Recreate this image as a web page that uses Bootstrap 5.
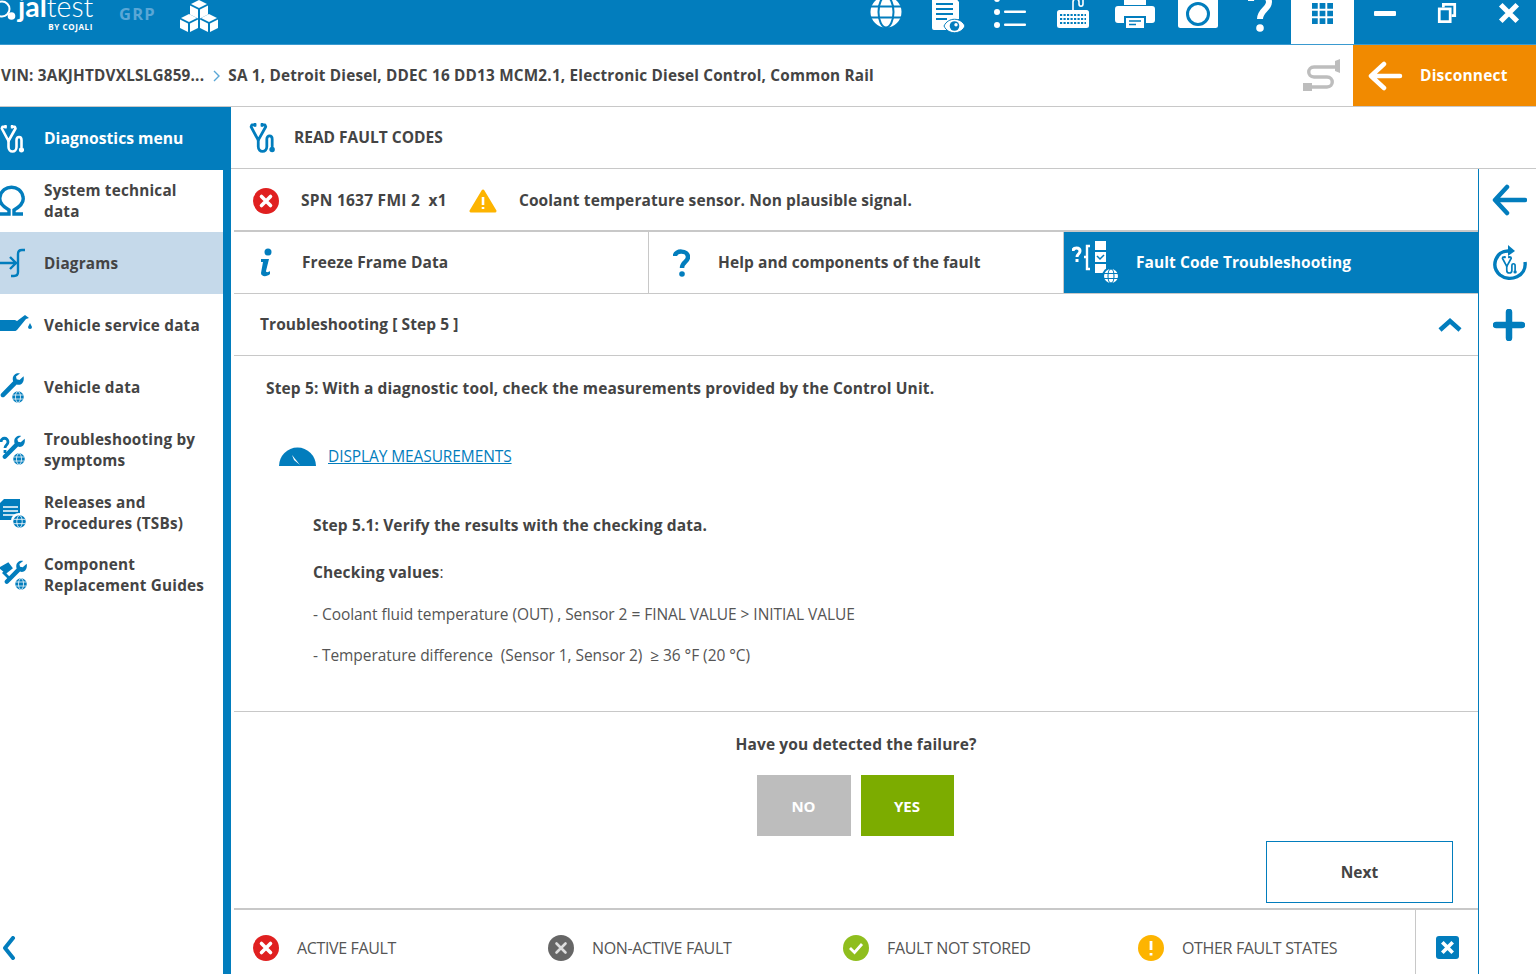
<!DOCTYPE html>
<html lang="en"><head><meta charset="utf-8"><title>Jaltest</title>
<link href="https://cdn.jsdelivr.net/npm/bootstrap@5.3.0/dist/css/bootstrap.min.css" rel="stylesheet">
<style>
:root{--jb:#027dbd;--jt:#444;--jl:#c8c8c8}
html,body{height:974px;overflow:hidden}
body{width:1536px;font-family:"Open Sans","Liberation Sans",sans-serif;color:var(--jt);font-size:15.5px;background:#fff}
svg{display:block;flex:none}
.jb{color:var(--jb)}
.topbar{height:45px;background:var(--jb);color:#fff;overflow:hidden;border-bottom:1px solid #3a9ad0}
.logo-wrap{width:854.4px;flex:none}
.logo-mark{font-family:Lato,sans-serif;font-size:28.5px;line-height:24px;margin-top:-6px}
.logo-mark b{font-weight:700}.logo-mark span{font-weight:300}
.logo-by{font-size:8px;line-height:8px;text-align:right;font-weight:700;letter-spacing:.6px;padding-right:1px;margin-top:5px}
.logo-txt{width:76px;margin-left:2px}
.grp{font-weight:700;font-size:16.5px;letter-spacing:1.2px;color:#5aa7d6;margin:2px 0 0 25px}
.cubes{margin-left:24px}
.tbtn{width:62.4px;flex:none;height:44px;overflow:hidden;padding-bottom:16px}
.tbtn-doc{padding-bottom:10px}
.tbtn-q{padding-bottom:12px}
.tbtn-on{background:#fff;height:45px;padding-bottom:21px;margin-bottom:-1px}
.tbtn-min{padding-bottom:28px}
.tbtn-res{padding-bottom:21px}
.tbtn-cls{padding-bottom:20px}
.crumb{height:62px;border-bottom:1px solid var(--jl);font-weight:700;font-size:15.3px;padding-left:1px;letter-spacing:.2px}
.crumb-sep{margin:0 7px 0 7px}
.cable{margin:0 12px 0 auto}
.disc{width:183px;height:61px;background:#f18a00;color:#fff;font-weight:700;font-size:15.5px;letter-spacing:.2px;border:0;border-radius:0;padding:0 0 0 15px;gap:17px}
.disc:hover{background:#f18a00;color:#fff}
.side{width:231px;height:868px;border-right:8px solid var(--jb)}
.side-h{height:62.5px;flex:none;margin-right:-8px;padding-top:1px;background:var(--jb);color:#fff;font-weight:700;font-size:15.7px}
.side-i{height:62.4px;flex:none;font-weight:700;font-size:15.3px;line-height:20.8px;letter-spacing:.2px;color:var(--jt);text-decoration:none}
.side-i svg{color:var(--jb);margin-left:-2px}
.side-ic{width:44px;flex:none}
.side-on{background:#c5d9ea}
.side-end{height:39px}
.main-h{height:62px;border-bottom:1px solid var(--jl);font-weight:700;font-size:15.5px;padding:1px 0 0 18px}
.main-ttl{margin-left:19px}
.pane{width:1247px;flex:none;padding-left:3px}
.fault{height:63px;border-bottom:2px solid var(--jl);padding:2px 0 0 19px;font-weight:700;letter-spacing:.1px}
.spn{letter-spacing:.25px}
.gap22{margin-left:22px}
.tabbar{height:62px;border-bottom:1px solid var(--jl)}
.tabx{flex:1 1 0;font-weight:700;border-right:1px solid var(--jl);letter-spacing:.08px}
.tabx:last-child{border-right:0;background:var(--jb);color:#fff}
.tab-ttl{margin-left:17px}
.sect{height:62px;border-bottom:1px solid var(--jl);padding:0 16px 0 26px;font-weight:700;letter-spacing:.08px}
.steps{height:356px;border-bottom:1px solid var(--jl);padding:21px 0 0 32px}
.steps p{margin:0}
.fw7{font-weight:700;letter-spacing:.13px}
.alink{font-size:15.5px;color:var(--jb);letter-spacing:-.1px}
.meas{margin:45px 0 0 13px;gap:12px}
.chk{margin:46px 0 0 47px}
.chk p{line-height:21px}
.chk .v{color:#555;letter-spacing:-.05px}
.m26{margin-top:26px!important}.m21{margin-top:21px!important}.m20{margin-top:20px!important}
.askbox{height:198px;border-bottom:2px solid var(--jl);padding-top:21px}
.ynrow{gap:10px;margin-top:19px;padding-right:2px}
.yn{width:94px;height:61px;border:0;border-radius:0;color:#fff;font-weight:700;font-size:15px}
.yn-n{background:#bdbdbd}.yn-n:hover{background:#bdbdbd;color:#fff}
.yn-y{background:#7cac00;width:93px}.yn-y:hover{background:#7cac00;color:#fff}
.next{width:187px;height:62px;border:1px solid var(--jb);border-radius:0;background:#fff;color:var(--jt);font-weight:700;font-size:15.5px}
.nextrow{padding-right:25px;margin-top:5px}
.legend{height:76px;color:#555;font-size:16px;letter-spacing:-.35px}
.lg-i{width:295px;flex:none;padding-left:19px;gap:18px}
.lg-last{width:296px}
.lg-c{width:63px;flex:none;border-left:1px solid var(--jl);height:76px;padding-bottom:2px}
.rail{width:58px;flex:none;border-left:1px solid var(--jb);padding-left:3px}
.rail-b{height:62.4px}
.closeb{width:23px;height:23px;background:var(--jb);border-radius:3px}
</style></head><body>
<svg width="0" height="0" class="position-absolute"><defs>
<symbol id="steth" viewBox="0 0 24 28"><g fill="none" stroke="currentColor" stroke-width="2.600" stroke-linecap="round" stroke-linejoin="round"><path d="M5.500 1.800H2.500L1.800 3.500 8.500 16 15.500 3.500 14.800 1.800H12"/><path d="M8.500 16v6c0 6 8 6 8 0v-7c0-4 5-4 5 0v7"/></g><circle cx="21.500" cy="24.800" r="2.600" fill="currentColor"/><path d="M5.500 0v3.500M12 0v3.500" stroke="currentColor" stroke-width="2.300"/></symbol>
<symbol id="globe" viewBox="0 0 24 24"><circle cx="12" cy="12" r="11.500" fill="currentColor"/><g fill="none" stroke="#fff" stroke-width="1.500"><ellipse cx="12" cy="12" rx="5" ry="11"/><path d="M1 8h22M1 16h22"/></g></symbol>
<symbol id="wrench" viewBox="0 0 32 32"><path fill="currentColor" d="M29 3.500l-5 4.500-3.500-.8-.8-3.500L24.500 0c-4-1-9 1.500-8.800 7 0 1 .2 1.800.5 2.500L1.500 24.500c-2.500 3 1.500 6.500 4 4L20.500 13.500c5 2 10-2.500 8.500-10z"/></symbol>
<symbol id="xcirc" viewBox="0 0 26 26"><circle cx="13" cy="13" r="13" fill="#e02020"/><path d="M8.500 8.500l9 9M17.500 8.500l-9 9" stroke="#fff" stroke-width="3.600" stroke-linecap="round"/></symbol>
</defs></svg>

<header class="topbar d-flex align-items-start">
<div class="logo-wrap d-flex align-items-start">
<svg width="16" height="24" viewBox="0 0 16 24"><circle cx="2" cy="9" r="7.500" fill="none" stroke="#fff" stroke-width="2"/><circle cx="11.500" cy="16" r="3.800" fill="#fff"/></svg>
<div class="logo-txt"><div class="logo-mark"><b>jal</b><span>test</span></div><div class="logo-by">BY COJALI</div></div>
<div class="grp">GRP</div>
<svg class="cubes" width="38" height="32" viewBox="0 0 38 32" fill="#fff"><path d="M19 0l8 4-8 4-8-4zM10 5.500l8 4v9l-8-4zM28 5.500l-8 4v9l8-4z"/><path d="M9 14l8 4-8 4-8-4zM0 19.500l8 4v8.500l-8-4zM18 19.500l-8 4v8.500l8-4z"/><path d="M29 14l8 4-8 4-8-4zM20 19.500l8 4v8.500l-8-4zM38 19.500l-8 4v8.500l8-4z"/></svg>
</div>
<div class="tbtn d-flex justify-content-center align-items-end"><svg width="32" height="32" viewBox="0 0 32 32"><circle cx="16" cy="16" r="15.500" fill="#fff"/><g fill="none" stroke="#027dbd" stroke-width="2"><ellipse cx="16" cy="16" rx="7.500" ry="15.500"/><path d="M0 10.500h32M0 21.500h32"/></g></svg></div>
<div class="tbtn tbtn-doc d-flex justify-content-center align-items-end"><svg width="36" height="38" viewBox="0 0 36 38"><path fill="#fff" d="M2 0h22l5 6v17c-6 1-10 5-12 11H4a2 2 0 0 1-2-2z"/><path d="M6 8h17M6 13h17M6 18h17M6 23h11" stroke="#027dbd" stroke-width="1.800"/><path d="M14 30c4-9 17-9 21 0-4 9-17 9-21 0z" fill="#fff" stroke="#027dbd" stroke-width="1"/><circle cx="24.500" cy="30" r="4.800" fill="#027dbd"/><circle cx="26" cy="28.800" r="1.700" fill="#fff"/></svg></div>
<div class="tbtn d-flex justify-content-center align-items-end"><svg width="32" height="32" viewBox="0 0 32 32" fill="#fff"><circle cx="3" cy="3" r="3"/><circle cx="3" cy="16" r="3"/><circle cx="3" cy="29" r="3"/><rect x="10" y="1.500" width="22" height="2.600" rx="1"/><rect x="10" y="14.500" width="22" height="2.600" rx="1"/><rect x="10" y="27.500" width="22" height="2.600" rx="1"/></svg></div>
<div class="tbtn d-flex justify-content-center align-items-end"><svg width="32" height="33" viewBox="0 0 32 33"><rect x="0" y="15" width="32" height="18" rx="2.500" fill="#fff"/><path d="M3 20h26M3 24h26M3 28h26" stroke="#027dbd" stroke-width="2" stroke-dasharray="2.200 1.300"/><path d="M16 15V7c0-4 6-4 6 0v2c0 3 4 3 4 0V3" fill="none" stroke="#fff" stroke-width="1.600"/></svg></div>
<div class="tbtn d-flex justify-content-center align-items-end"><svg width="40" height="32" viewBox="0 0 40 32"><path fill="#fff" d="M9 0h22v9H9zM3 10h34a3 3 0 0 1 3 3v11a3 3 0 0 1-3 3h-6v-7H9v7H3a3 3 0 0 1-3-3V13a3 3 0 0 1 3-3zM11 22h18v10H11z"/><path d="M14 25h12M14 28.500h7" stroke="#027dbd" stroke-width="1.400"/></svg></div>
<div class="tbtn d-flex justify-content-center align-items-end"><svg width="40" height="34" viewBox="0 0 40 34"><path fill="#fff" d="M2.500 4h6l1-4h7l2 4H37.500A2.500 2.500 0 0 1 40 6.500v25a2.500 2.500 0 0 1-2.500 2.500h-35A2.500 2.500 0 0 1 0 31.500v-25A2.500 2.500 0 0 1 2.500 4z"/><circle cx="20" cy="20" r="10.500" fill="none" stroke="#027dbd" stroke-width="3"/></svg></div>
<div class="tbtn tbtn-q d-flex justify-content-center align-items-end"><svg width="24" height="40" viewBox="0 0 24 40" fill="none"><path d="M3 9c0-8 18-8 18 1 0 7-9 8-9 17" stroke="#fff" stroke-width="6"/><circle cx="12" cy="36" r="3.800" fill="#fff"/></svg></div>
<div class="tbtn tbtn-on d-flex justify-content-center align-items-end"><svg width="21" height="21" viewBox="0 0 22 22" fill="#027dbd"><path d="M0 0h6v6H0zM8 0h6v6H8zM16 0h6v6h-6zM0 8h6v6H0zM8 8h6v6H8zM16 8h6v6h-6zM0 16h6v6H0zM8 16h6v6H8zM16 16h6v6h-6z"/></svg></div>
<div class="tbtn tbtn-min d-flex justify-content-center align-items-end"><svg width="22" height="5" viewBox="0 0 22 5"><rect width="22" height="5" rx="1" fill="#fff"/></svg></div>
<div class="tbtn tbtn-res d-flex justify-content-center align-items-end"><svg width="20" height="20" viewBox="0 0 20 22" fill="none" stroke="#fff" stroke-width="3"><path d="M6 5V1.500h12.500V14H15"/><rect x="1.500" y="6.500" width="12" height="14"/></svg></div>
<div class="tbtn tbtn-cls d-flex justify-content-center align-items-end"><svg width="22" height="22" viewBox="0 0 24 24"><path d="M3 3l18 18M21 3L3 21" stroke="#fff" stroke-width="5.500"/></svg></div>
</header>

<div class="crumb d-flex align-items-center">
<span>VIN: 3AKJHTDVXLSLG859...</span>
<svg class="crumb-sep" width="10" height="12" viewBox="0 0 10 12"><path d="M3 1l5 5-5 5" fill="none" stroke="#5aa7d6" stroke-width="1.400"/></svg>
<span>SA 1, Detroit Diesel, DDEC 16 DD13 MCM2.1, Electronic Diesel Control, Common Rail</span>
<svg class="cable" width="38" height="33" viewBox="0 0 38 33" fill="none" stroke="#bdbdbd" stroke-width="3.400"><path d="M32 8H11c-7 0-7 10 0 10h13c7 0 7 10 0 10H9"/><path d="M32 2l5-2v14l-5-2z" fill="#bdbdbd" stroke="none"/><rect x="0" y="24" width="9" height="8" fill="#bdbdbd" stroke="none"/></svg>
<button class="btn disc d-flex align-items-center align-self-start" type="button"><svg width="35" height="30" viewBox="0 0 35 30" fill="none" stroke="#fff" stroke-width="4.500" stroke-linecap="round" stroke-linejoin="round"><path d="M16 3L3 15l13 12M4 15h28"/></svg>Disconnect</button>
</div>

<div class="d-flex">
<aside class="side d-flex flex-column">
<div class="side-h d-flex align-items-center"><div class="side-ic"><svg width="24" height="28" viewBox="0 0 24 28"><use href="#steth"/></svg></div>Diagnostics menu</div>
<a class="side-i d-flex align-items-center" href="#"><div class="side-ic"><svg width="32" height="32" viewBox="0 0 32 32"><path fill="none" stroke="currentColor" stroke-width="3.400" d="M2 29h9v-4C4 21 1 16 2 12 4-1 23-1 25 12c1 4-2 9-9 13v4h9"/></svg></div><span>System technical<br>data</span></a>
<a class="side-i side-on d-flex align-items-center" href="#"><div class="side-ic"><svg width="32" height="32" viewBox="0 0 32 32"><path fill="none" stroke="currentColor" stroke-width="2.400" d="M0 16h18M12 10l6 6-6 6M27 3h-3c-3 0-4 2-4 4v18c0 3-2 4-4 4h-3"/></svg></div><span>Diagrams</span></a>
<a class="side-i d-flex align-items-center" href="#"><div class="side-ic"><svg width="36" height="32" viewBox="0 0 36 32"><path fill="currentColor" d="M2 11h15l2 1 8-6 4 3-3 1-9 11c-1 1-2 1-3 1H2z"/><path fill="currentColor" d="M32 14l2 4a2 2 0 1 1-4 0z"/></svg></div><span>Vehicle service data</span></a>
<a class="side-i d-flex align-items-center" href="#"><div class="side-ic"><svg width="32" height="32" viewBox="0 0 32 32"><use href="#wrench" x="2" width="26" height="29"/><circle cx="20" cy="25" r="7.500" fill="#fff"/><use href="#globe" x="14" y="19" width="12" height="12" color="#027dbd"/></svg></div><span>Vehicle data</span></a>
<a class="side-i d-flex align-items-center" href="#"><div class="side-ic"><svg width="32" height="32" viewBox="0 0 32 32"><use href="#wrench" x="4" y="1" width="25" height="27"/><circle cx="21" cy="25" r="7" fill="#fff"/><use href="#globe" x="15" y="19" width="12" height="12" color="#027dbd"/><path d="M3 8c0-5 7-5 7 0 0 3-3 3-3 6M7 16v3" stroke="currentColor" stroke-width="2.800" fill="none"/></svg></div><span>Troubleshooting by<br>symptoms</span></a>
<a class="side-i d-flex align-items-center" href="#"><div class="side-ic"><svg width="32" height="32" viewBox="0 0 32 32"><path fill="currentColor" d="M6 2h16v21H2V6z"/><path d="M5 10h15M5 14h15M5 18h15" stroke="#fff" stroke-width="1.600"/><circle cx="21" cy="24" r="8" fill="#fff"/><use href="#globe" x="15" y="18" width="13" height="13" color="#027dbd"/></svg></div><span>Releases and<br>Procedures (TSBs)</span></a>
<a class="side-i d-flex align-items-center" href="#"><div class="side-ic"><svg width="32" height="32" viewBox="0 0 32 32"><use href="#wrench" x="6" y="1" width="25" height="27"/><circle cx="23" cy="25" r="7" fill="#fff"/><use href="#globe" x="17" y="19" width="12" height="12" color="#027dbd"/><path d="M3 9l5 4 5-4-3-4zM5 13l7 7" stroke="currentColor" stroke-width="2.800" fill="currentColor"/></svg></div><span>Component<br>Replacement Guides</span></a>
<div class="mt-auto side-end"><svg class="jb" width="16" height="24" viewBox="0 0 16 24" fill="none" stroke="currentColor" stroke-width="4" stroke-linecap="round" stroke-linejoin="round"><path d="M13 2L5 12l8 10"/></svg></div>
</aside>

<div class="flex-grow-1">
<div class="main-h d-flex align-items-center"><svg class="jb" width="26" height="30" viewBox="0 0 24 28"><use href="#steth"/></svg><span class="main-ttl">READ FAULT CODES</span></div>
<div class="d-flex">
<div class="pane">
<div class="fault d-flex align-items-center"><svg width="26" height="26" viewBox="0 0 26 26"><use href="#xcirc"/></svg><span class="gap22 spn">SPN 1637 FMI 2&nbsp; x1</span>
<svg class="gap22" width="28" height="24" viewBox="0 0 28 24"><path d="M14 2L2 22h24z" fill="#fdb400" stroke="#fdb400" stroke-width="3" stroke-linejoin="round"/><path d="M14 8v8M14 18v2" stroke="#fff" stroke-width="2.600"/></svg>
<span class="gap22">Coolant temperature sensor. Non plausible signal.</span></div>
<div class="tabbar d-flex">
<div class="tabx d-flex align-items-center"><div class="ps-4"><svg class="jb" width="16" height="30" viewBox="0 0 16 30" fill="currentColor"><circle cx="10" cy="4" r="3.500"/><path d="M3 11h8l-3 12c0 2 3 1 4 0v3c-3 3-9 3-9-1l2-11H3z"/></svg></div><span class="ms-4 ps-1">Freeze Frame Data</span></div>
<div class="tabx d-flex align-items-center"><div class="ps-4"><svg class="jb" width="17" height="28" viewBox="0 0 17 28" fill="none" stroke="currentColor" stroke-width="4.500"><path d="M2 7c0-6 13-6 13 1 0 5-6 5-6 11"/><circle cx="9" cy="25" r="2.800" fill="currentColor" stroke="none"/></svg></div><span class="ms-4 ps-1">Help and components of the fault</span></div>
<div class="tabx d-flex align-items-center"><svg class="ms-2" width="47" height="44" viewBox="0 0 47 44" fill="#fff"><path d="M1 10c0-4 7-4 7 0 0 3-3 3-3 6M5 18v3" stroke="#fff" stroke-width="3" fill="none"/><path d="M18 5h-3v11h-3 3v12h3" stroke="#fff" stroke-width="2.400" fill="none"/><rect x="23" y="0" width="11" height="9"/><rect x="23" y="11" width="11" height="10"/><rect x="23" y="23" width="11" height="9"/><path d="M25 15l3 3 4-4" stroke="#027dbd" stroke-width="1.500" fill="none"/><circle cx="39" cy="35" r="9" fill="#027dbd"/><circle cx="39" cy="35" r="7" fill="#fff"/><g fill="none" stroke="#027dbd" stroke-width="1.100"><ellipse cx="39" cy="35" rx="3" ry="7"/><path d="M32 32.500h14M32 37.500h14"/></g></svg><span class="tab-ttl">Fault Code Troubleshooting</span></div>
</div>
<div class="sect d-flex align-items-center justify-content-between"><span>Troubleshooting [ Step 5 ]</span><svg class="jb" width="24" height="15" viewBox="0 0 24 15" fill="none" stroke="currentColor" stroke-width="4.500"><path d="M2 13l10-9 10 9"/></svg></div>
<div class="steps">
<p class="fw7">Step 5: With a diagnostic tool, check the measurements provided by the Control Unit.</p>
<div class="meas d-flex align-items-center"><svg width="37" height="19" viewBox="0 0 37 19"><path fill="#027dbd" d="M0 19a18.500 18.500 0 0 1 37 0z"/><path d="M13 8l8 10-6-5z" fill="#fff"/></svg><a class="alink" href="#">DISPLAY MEASUREMENTS</a></div>
<div class="chk">
<p class="fw7">Step 5.1: Verify the results with the checking data.</p>
<p class="fw7 m26">Checking values<span class="fw-normal">:</span></p>
<p class="v m21">- Coolant fluid temperature (OUT) , Sensor 2 = FINAL VALUE &gt; INITIAL VALUE</p>
<p class="v m20">- Temperature difference&nbsp; (Sensor 1, Sensor 2)&nbsp; ≥ 36 °F (20 °C)</p>
</div>
</div>
<div class="askbox">
<div class="text-center fw7">Have you detected the failure?</div>
<div class="d-flex justify-content-center ynrow"><button class="btn yn yn-n" type="button">NO</button><button class="btn yn yn-y" type="button">YES</button></div>
<div class="nextrow d-flex justify-content-end"><button class="btn next" type="button">Next</button></div>
</div>
<div class="legend d-flex align-items-center">
<div class="lg-i d-flex align-items-center"><svg width="26" height="26" viewBox="0 0 26 26"><use href="#xcirc"/></svg>ACTIVE FAULT</div>
<div class="lg-i d-flex align-items-center"><svg width="26" height="26" viewBox="0 0 26 26"><circle cx="13" cy="13" r="13" fill="#666"/><path d="M8.500 8.500l9 9M17.500 8.500l-9 9" stroke="#ddd" stroke-width="2.600" stroke-linecap="round"/></svg>NON-ACTIVE FAULT</div>
<div class="lg-i d-flex align-items-center"><svg width="26" height="26" viewBox="0 0 26 26"><circle cx="13" cy="13" r="13" fill="#8fbe1e"/><path d="M7 13l4.500 4.500L19 9" fill="none" stroke="#fff" stroke-width="2.800"/></svg>FAULT NOT STORED</div>
<div class="lg-i lg-last d-flex align-items-center"><svg width="26" height="26" viewBox="0 0 26 26"><circle cx="13" cy="13" r="13" fill="#fdb400"/><path d="M13 6v9M13 18v2.500" stroke="#fff" stroke-width="2.800"/></svg>OTHER FAULT STATES</div>
<div class="lg-c d-flex align-items-center justify-content-center"><div class="closeb d-flex align-items-center justify-content-center"><svg width="15" height="15" viewBox="0 0 13 13"><path d="M2 2l9 9M11 2l-9 9" stroke="#fff" stroke-width="3.200"/></svg></div></div>
</div>
</div>
<div class="rail jb d-flex flex-column">
<div class="rail-b d-flex align-items-center justify-content-center"><svg width="35" height="32" viewBox="0 0 35 32" fill="none" stroke="currentColor" stroke-width="4.500" stroke-linecap="round" stroke-linejoin="round"><path d="M15 3L3 16l12 13M4 16h29"/></svg></div>
<div class="rail-b d-flex align-items-center justify-content-center"><svg width="36" height="38" viewBox="0 0 36 38"><path d="M17 7C5 7-1 22 9 31c10 8 27 1 25-13" fill="none" stroke="currentColor" stroke-width="3.400"/><path d="M17 1l7 6-7 5z" fill="currentColor"/><use href="#steth" x="10" y="12" width="16" height="18"/></svg></div>
<div class="rail-b d-flex align-items-center justify-content-center"><svg width="32" height="32" viewBox="0 0 32 32"><path d="M16 3v26M3 16h26" stroke="currentColor" stroke-width="6.500" stroke-linecap="round"/></svg></div>
</div>
</div>
</div>
</div>
<script src="https://cdn.jsdelivr.net/npm/bootstrap@5.3.0/dist/js/bootstrap.bundle.min.js"></script>
</body></html>
